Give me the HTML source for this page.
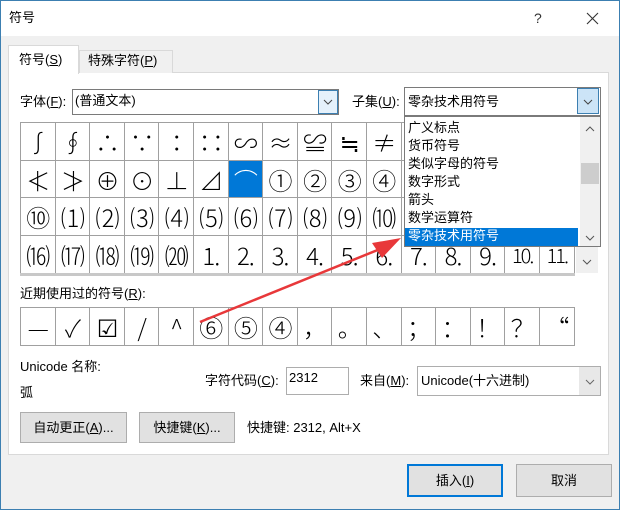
<!DOCTYPE html>
<html><head><meta charset="utf-8"><style>
*{margin:0;padding:0;box-sizing:border-box}
body{width:620px;height:510px;position:relative;overflow:hidden;background:#f0f0f0;font-family:"Liberation Sans","Noto Sans CJK SC",sans-serif;font-size:13px;color:#000}
.a{position:absolute}
.t{position:absolute;white-space:nowrap;font-size:13px;line-height:16px}
.cell{position:absolute;width:35px;border-right:1px solid #a0a0a0;border-bottom:1px solid #a0a0a0;text-align:center;font-size:24px;font-family:"Noto Sans CJK SC","DejaVu Sans",sans-serif;font-weight:300;overflow:hidden;background:#fff;letter-spacing:-1px}
.btn{position:absolute;background:#e1e1e1;border:1px solid #adadad;text-align:center;font-size:13px}
u{text-decoration:underline}
</style></head><body>
<div class="a" style="left:0;top:0;width:620px;height:36px;background:#fff"></div>
<div class="a" style="left:0;top:0;width:1px;height:510px;background:#3c7fb1"></div>
<div class="a" style="left:619px;top:0;width:1px;height:510px;background:#3c7fb1"></div>
<div class="a" style="left:0;top:0;width:620px;height:1px;background:#3c7fb1"></div>
<div class="a" style="left:0;top:509px;width:620px;height:1px;background:#3c7fb1"></div>
<div class="t" style="left:9px;top:10px;font-size:13px">符号</div>
<div class="t" style="left:534px;top:10px;font-size:14px;color:#333">?</div>
<svg class="a" style="left:586px;top:12px" width="13" height="13"><path d="M1 1L12 12M12 1L1 12" stroke="#333" stroke-width="1.1"/></svg>

<div class="a" style="left:8px;top:72px;width:601px;height:383px;background:#fff;border:1px solid #d9d9d9"></div>
<div class="a" style="left:79px;top:50px;width:94px;height:23px;background:#f0f0f0;border:1px solid #d9d9d9;border-bottom:none"></div>
<div class="t" style="left:88px;top:53px">特殊字符(<u>P</u>)</div>
<div class="a" style="left:8px;top:45px;width:71px;height:29px;background:#fff;border:1px solid #d9d9d9;border-bottom:none"></div>
<div class="t" style="left:19px;top:52px">符号(<u>S</u>)</div>

<div class="t" style="left:20px;top:94px">字体(<u>F</u>):</div>
<div class="a" style="left:72px;top:89px;width:267px;height:26px;border:1px solid #7a7a7a;background:#fff"></div>
<div class="t" style="left:75px;top:93px">(普通文本)</div>
<div class="a" style="left:318px;top:90px;width:20px;height:24px;background:#e5f1fb;border:1px solid #3c7fb1"></div>
<svg class="a" style="left:323px;top:99px" width="10" height="6"><path d="M1 1L5 5L9 1" fill="none" stroke="#444"/></svg>
<div class="t" style="left:352px;top:94px">子集(<u>U</u>):</div>
<div class="a" style="left:404px;top:87px;width:197px;height:29px;border:1px solid #7a7a7a;background:#fff"></div>
<div class="t" style="left:408px;top:94px">零杂技术用符号</div>
<div class="a" style="left:577px;top:88px;width:22px;height:26px;background:#cce4f7;border:1px solid #3c7fb1"></div>
<svg class="a" style="left:583px;top:99px" width="10" height="6"><path d="M1 1L5 5L9 1" fill="none" stroke="#444"/></svg>

<div class="a" style="left:20px;top:122px;width:554px;height:151px;border-left:1px solid #a0a0a0;border-top:1px solid #a0a0a0;background:#fff"></div>
<div id="g"></div>
<div class="a" style="left:576px;top:122px;width:22px;height:151px;background:#f0f0f0"></div>
<svg class="a" style="left:582px;top:259px" width="10" height="6"><path d="M1 1L5 5L9 1" fill="none" stroke="#555"/></svg>
<div class="a" style="left:20px;top:273px;width:555px;height:3px;background:#c8c8c8"></div>

<div class="a" style="left:404px;top:116px;width:197px;height:131px;border:1px solid #7a7a7a;background:#fff"></div>
<div class="a" style="left:405px;top:228px;width:173px;height:18px;background:#0078d7"></div>
<div class="a" style="left:580px;top:117px;width:20px;height:129px;background:#f0f0f0"></div>
<div class="a" style="left:581px;top:163px;width:18px;height:21px;background:#cdcdcd"></div>
<svg class="a" style="left:585px;top:126px" width="10" height="6"><path d="M1 5L5 1L9 5" fill="none" stroke="#555"/></svg>
<svg class="a" style="left:585px;top:235px" width="10" height="6"><path d="M1 1L5 5L9 1" fill="none" stroke="#555"/></svg>
<div class="t" style="left:408px;top:119px;line-height:18px">广义标点<br>货币符号<br>类似字母的符号<br>数字形式<br>箭头<br>数学运算符<br><span style="color:#fff">零杂技术用符号</span></div>

<div class="t" style="left:20px;top:286px">近期使用过的符号(<u>R</u>):</div>
<div class="a" style="left:20px;top:307px;width:555px;height:39px;border-left:1px solid #a0a0a0;border-top:1px solid #a0a0a0"></div>
<div id="r"></div>

<div class="t" style="left:20px;top:359px">Unicode 名称:</div>
<div class="t" style="left:20px;top:385px">弧</div>
<div class="t" style="left:205px;top:373px">字符代码(<u>C</u>):</div>
<div class="a" style="left:286px;top:367px;width:63px;height:28px;border:1px solid #adadad;background:#fff"></div>
<div class="t" style="left:289px;top:370px">2312</div>
<div class="t" style="left:360px;top:373px">来自(<u>M</u>):</div>
<div class="a" style="left:417px;top:366px;width:184px;height:30px;border:1px solid #adadad;background:#fff"></div>
<div class="t" style="left:421px;top:373px">Unicode(十六进制)</div>
<div class="a" style="left:579px;top:367px;width:21px;height:28px;background:#e8e8e8"></div>
<svg class="a" style="left:585px;top:379px" width="10" height="6"><path d="M1 1L5 5L9 1" fill="none" stroke="#666"/></svg>

<div class="btn" style="left:20px;top:412px;width:107px;height:31px;line-height:29px">自动更正(<u>A</u>)...</div>
<div class="btn" style="left:139px;top:412px;width:96px;height:31px;line-height:29px">快捷键(<u>K</u>)...</div>
<div class="t" style="left:247px;top:420px">快捷键: 2312, Alt+X</div>

<div class="btn" style="left:407px;top:464px;width:96px;height:33px;line-height:29px;border:2px solid #0078d7">插入(<u>I</u>)</div>
<div class="btn" style="left:516px;top:464px;width:96px;height:33px;line-height:31px">取消</div>

<svg class="a" style="left:0;top:0" width="620" height="510"><path d="M200 322L385 247" stroke="#e8383a" stroke-width="2.5"/><path d="M401 238L372 243L382 258Z" fill="#e8383a"/></svg>

<script>
var rows=[["∫","∮","∴","∵","∶","∷","∽","≈","≌","≒","≠","","","","",""],
["≮","≯","⊕","⊙","⊥","⊿","⌒","①","②","③","④","","","","",""],
["⑩","⑴","⑵","⑶","⑷","⑸","⑹","⑺","⑻","⑼","⑽","","","","",""],
["⒃","⒄","⒅","⒆","⒇","1.","2.","3.","4.","5.","6.","7.","8.","9.","10.","11."]];
var ys=[122,160,197,235],hs=[38,37,38,38],h="";
for(var r=0;r<4;r++)for(var c=0;c<16;c++){var x=21+c*34.6;var s=(r==1&&c==6);var t=rows[r][c];
var fs=(t.length>2)?'font-size:20px;letter-spacing:-2px;':'';
h+='<div class="cell" style="left:'+x+'px;top:'+(ys[r]+1)+'px;height:'+hs[r]+'px;line-height:'+hs[r]+'px;width:34.6px;'+fs+(s?'background:#0078d7;color:#fff;':'')+'">'+t+'</div>';}
document.getElementById('g').innerHTML=h;
var rec=["—","✓","☑","/","^","⑥","⑤","④","，","。","、","；","：","！","？","“"];h="";
for(var c=0;c<16;c++){var x=21+c*34.6;h+='<div class="cell" style="left:'+x+'px;top:308px;height:38px;line-height:38px;width:34.6px">'+rec[c]+'</div>';}
document.getElementById('r').innerHTML=h;
</script>
</body></html>
